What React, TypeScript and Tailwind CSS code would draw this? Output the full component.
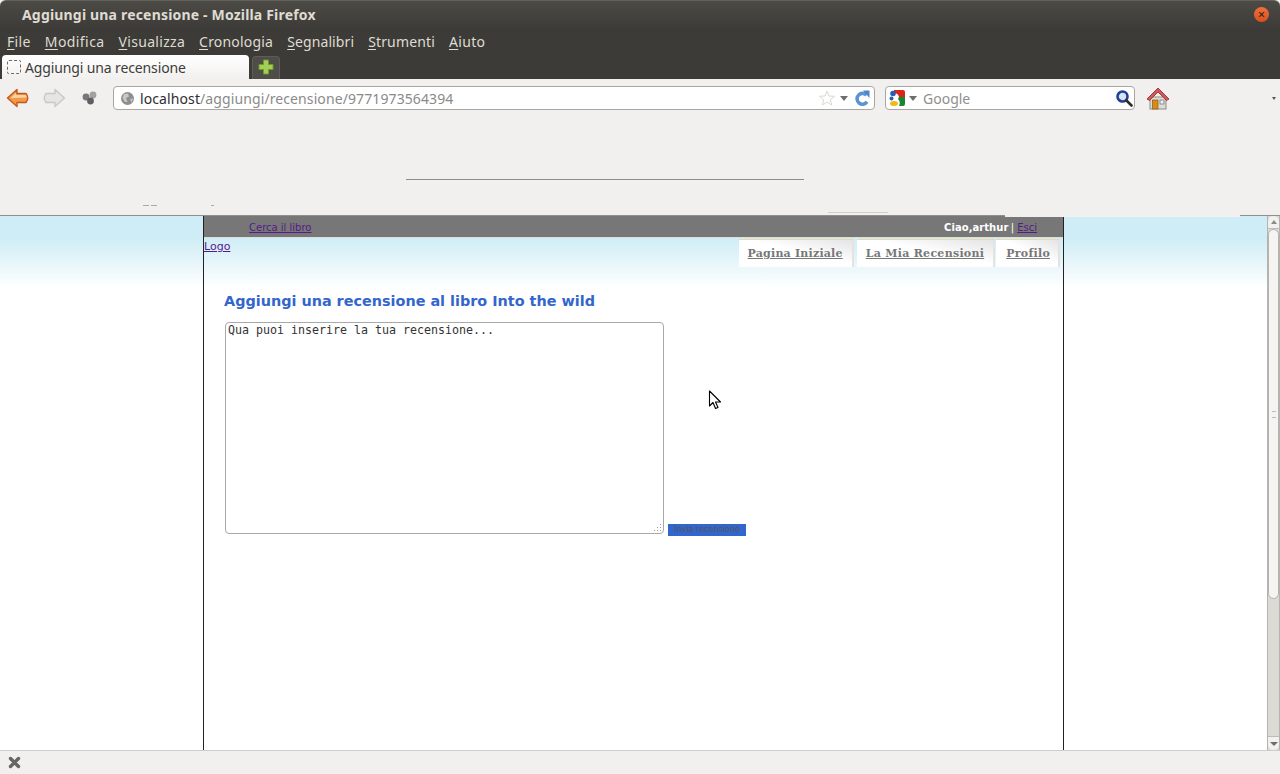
import React from "react";

const UI = { fontFamily: '"Noto Sans", "Open Sans", sans-serif' };

function U({ children }: { children: string }) {
  return <span className="underline underline-offset-2">{children}</span>;
}

function MenuItem({ first, rest, spacing }: { first: string; rest: string; spacing: string }) {
  return (
    <span className={`text-[14px] text-[#dfdbd2] ${spacing}`}>
      <U>{first}</U>
      {rest}
    </span>
  );
}

function BackArrow() {
  return (
    <svg width="24" height="22" viewBox="0 0 24 22">
      <path d="M1.5 11 L11 2.5 L11 6.5 L20 6.5 Q23.5 11 20 15.5 L11 15.5 L11 19.5 Z" fill="#f09a4c" stroke="#c4581b" strokeWidth="1.4" strokeLinejoin="round" />
      <path d="M4.5 11 L10 6 L10 8 L20 8 L21 10.5 L6 11 Z" fill="#fbd3a4" />
    </svg>
  );
}

function ForwardArrow() {
  return (
    <svg width="24" height="22" viewBox="0 0 24 22">
      <path d="M22.5 11 L13 2.5 L13 6.5 L4 6.5 Q0.5 11 4 15.5 L13 15.5 L13 19.5 Z" fill="#e6e5e2" stroke="#c9c8c5" strokeWidth="1.4" strokeLinejoin="round" />
    </svg>
  );
}

function Reload() {
  return (
    <svg width="16" height="17" viewBox="0 0 16 17">
      <path d="M12.5 5.2 A5.4 5.4 0 1 0 13 11.8" fill="none" stroke="#5b94d3" strokeWidth="3.6" />
      <path d="M9 0.5 L15.5 0.5 L15.5 8 Z" fill="#4a86cc" />
    </svg>
  );
}

function Star() {
  return (
    <svg width="16" height="16" viewBox="0 0 16 16">
      <path d="M8 1 L10 6 L15.5 6.3 L11.3 9.8 L12.7 15 L8 12.1 L3.3 15 L4.7 9.8 L0.5 6.3 L6 6 Z" fill="#fff" stroke="#d8d8d6" />
    </svg>
  );
}

function Caret() {
  return <span className="w-0 h-0 border-x-[4px] border-x-transparent border-t-[5px] border-t-[#6e6e6e]" />;
}

function GoogleIcon() {
  return (
    <svg width="16" height="16" viewBox="0 0 16 16">
      <rect x="0" y="0" width="16" height="16" rx="2" fill="#fff" />
      <path d="M5 0 H14 Q16 0 16 2 V7 H10 Q9 3 5 3 Z" fill="#d8261f" />
      <path d="M10 7 H16 V14 Q16 16 14 16 H10 Q12 12 9 9 Z" fill="#17862d" />
      <circle cx="4" cy="3.5" r="2.8" fill="#2a5cb4" />
      <circle cx="2.5" cy="8.5" r="2" fill="#2a5cb4" />
      <ellipse cx="5" cy="13.5" rx="4" ry="2.5" fill="#f2b71a" />
    </svg>
  );
}

function Magnifier() {
  return (
    <svg width="18" height="18" viewBox="0 0 18 18">
      <circle cx="7.5" cy="7.5" r="5" fill="#d6e4f5" stroke="#23408f" strokeWidth="2.6" />
      <path d="M11.5 11.5 L16.5 16.5" stroke="#2d2d2d" strokeWidth="2.6" strokeLinecap="round" />
    </svg>
  );
}

function Home() {
  return (
    <svg width="24" height="24" viewBox="0 0 24 24">
      <rect x="4" y="11" width="16" height="12" fill="#dcdcd8" stroke="#8b8b87" />
      <path d="M1 13 L12 2 L23 13 L20.5 14.5 L12 6 L3.5 14.5 Z" fill="#d0575a" stroke="#a43c3e" strokeLinejoin="round" />
      <rect x="6.5" y="14" width="5.5" height="9" fill="#d88a1c" stroke="#8f5c10" strokeWidth="0.7" />
      <rect x="14" y="14" width="4" height="4" fill="#eef1f4" stroke="#8b8b87" />
    </svg>
  );
}

function Tab({ label, box, spacing }: { label: string; box: string; spacing: string }) {
  return (
    <span className={`h-[28px] border-t border-t-[#eed9a6] border-r-2 border-r-[#e3e3e3] pt-[6px] flex items-start bg-gradient-to-tr from-white from-55% to-[#e4e4e4] ${box}`}>
      <a className={`underline text-[#777] font-bold text-[11px] leading-[16px] ${spacing}`} style={{ fontFamily: '"DejaVu Serif", serif' }}>
        {label}
      </a>
    </span>
  );
}

function Scrollbar() {
  return (
    <div className="w-[13px] shrink-0 bg-[#dcdad5] border-x border-[#b5b3ae] flex flex-col items-stretch">
      <div className="h-[13px] bg-[#f2f1ef] rounded-t-[6px] flex items-center justify-center border-b border-[#bbb]">
        <span className="w-0 h-0 border-x-[3px] border-x-transparent border-b-[4px] border-b-[#8b8b8b]" />
      </div>
      <div className="h-[370px] bg-[#f5f4f2] rounded-[6px] border border-[#b5b3ae] flex items-center justify-center">
        <span className="w-[4px] h-[7px] border-y border-[#bbb]" />
      </div>
      <div className="flex-1" />
      <div className="h-[14px] bg-[#f2f1ef] rounded-b-[6px] flex items-center justify-center border-t border-[#bbb]">
        <span className="w-0 h-0 border-x-[4px] border-x-transparent border-t-[4px] border-t-[#6e6e6e]" />
      </div>
    </div>
  );
}

export default function App() {
  return (
    <div className="relative w-[1280px] h-[774px] overflow-hidden flex flex-col bg-[#f1f0ee]" style={UI}>
      {/* Title bar */}
      <div className="h-[30px] shrink-0 bg-gradient-to-b from-[#4b4a45] to-[#3d3b37] rounded-t-[6px] border-t border-[#62615b] flex items-center justify-between pl-[22px] pr-[11px] pb-[2px]">
        <span className="text-[14px] font-bold text-[#dfdbd2] tracking-[0.18px]">Aggiungi una recensione - Mozilla Firefox</span>
        <span className="w-[15px] h-[15px] rounded-full bg-gradient-to-b from-[#f0703a] to-[#d9501e] flex items-center justify-center text-[#2f211a] text-[13px] leading-none">×</span>
      </div>
      {/* Menu */}
      <div className="h-[25px] shrink-0 bg-[#3d3b37] flex items-center gap-[14px] pl-[7px] pb-[2px]">
        <MenuItem first="F" rest="ile" spacing="tracking-[0.33px]" />
        <MenuItem first="M" rest="odifica" spacing="tracking-[0.43px]" />
        <MenuItem first="V" rest="isualizza" spacing="tracking-[0.3px]" />
        <MenuItem first="C" rest="ronologia" spacing="tracking-[0.2px]" />
        <MenuItem first="S" rest="egnalibri" spacing="tracking-[0.1px]" />
        <MenuItem first="S" rest="trumenti" spacing="tracking-[0.15px]" />
        <MenuItem first="A" rest="iuto" spacing="tracking-[0.33px]" />
      </div>
      {/* Tabs */}
      <div className="h-[24px] shrink-0 bg-[#3d3b37] flex items-end pl-[2px] gap-[3px]">
        <div className="w-[247px] h-[24px] bg-gradient-to-b from-white to-[#f1f0ee] rounded-t-[4px] flex items-center pl-[5px] gap-[4px]">
          <span className="w-[14px] h-[14px] rounded-[2px] border border-dashed border-[#6b6b6b]" />
          <span className="text-[14px] text-[#3c3c3c] tracking-[-0.13px]">Aggiungi una recensione</span>
        </div>
        <div className="w-[28px] h-[23px] bg-[#4e4d48] border border-[#5e5d58] border-b-0 rounded-t-[4px] flex items-center justify-center pb-[2px]">
          <svg width="16" height="16" viewBox="0 0 16 16">
            <path d="M5.5 1 H10.5 V5.5 H15 V10.5 H10.5 V15 H5.5 V10.5 H1 V5.5 H5.5 Z" fill="#a4cf57" stroke="#6f9a2c" />
          </svg>
        </div>
      </div>
      {/* Toolbar */}
      <div className="h-[137px] shrink-0 bg-[#f1f0ee] flex flex-col border-b border-[#8f8f8f]">
        <div className="h-[38px] flex items-center shrink-0">
          <div className="w-[113px] flex items-center pl-[6px] gap-[12px]">
            <BackArrow />
            <ForwardArrow />
            <svg width="18" height="16" viewBox="0 0 18 16" className="ml-[3px]">
              <circle cx="5" cy="7" r="3.4" fill="#77777a" />
              <circle cx="12" cy="5" r="3.4" fill="#a0a0a2" />
              <circle cx="9.5" cy="11" r="3.4" fill="#5f5f62" />
            </svg>
          </div>
          <div className="w-[762px] h-[24px] bg-white border border-[#aaa7a2] rounded-[4px] flex items-center pl-[6px] pr-[4px]">
            <svg width="15" height="15" viewBox="0 0 15 15">
              <circle cx="7.5" cy="7.5" r="6.5" fill="#8e8e8e" />
              <path d="M4 3 L8 2.5 L9 5.5 L6 7 L7.5 11 L5 11 L2.5 7 Z M10 8 L13 7.5 L11.5 11.5 Z" fill="#c8c8c8" />
            </svg>
            <span className="text-[14px] ml-[5px] text-[#2e2e2e] tracking-[0.1px]">localhost</span>
            <span className="text-[14px] text-[#8a8a8a] tracking-[0.1px]">/aggiungi/recensione/9771973564394</span>
            <span className="flex-1" />
            <Star />
            <span className="ml-[5px] mr-[6px] flex"><Caret /></span>
            <Reload />
          </div>
          <div className="w-[250px] h-[24px] ml-[10px] bg-white border border-[#aaa7a2] rounded-[4px] flex items-center pl-[3px] pr-[1px]">
            <GoogleIcon />
            <span className="ml-[4px] flex"><Caret /></span>
            <span className="text-[14px] text-[#8f8f8f] ml-[6px] flex-1">Google</span>
            <Magnifier />
          </div>
          <span className="ml-[11px] flex"><Home /></span>
          <span className="flex-1" />
          <span className="mr-[4px] w-0 h-0 border-x-[2px] border-x-transparent border-t-[3px] border-t-[#555]" />
        </div>
        <div className="pl-[406px] pt-[62px]">
          <div className="w-[398px] h-px bg-[#8c8c8c]" />
        </div>
      </div>
      {/* Content */}
      <div className="flex-1 min-h-0 flex bg-white">
        <div className="flex-1 min-w-0 bg-[linear-gradient(#cfedf6_0,#cfedf6_22px,#ffffff_72px)] pl-[203px]">
          <div className="w-[861px] h-full border-x border-[#222] flex flex-col">
            <div className="h-[22px] shrink-0 bg-[#777] border-b border-[#ddd] flex items-center justify-between pl-[45px] pr-[26px] pt-[1px] text-[10px]" style={{ fontFamily: '"DejaVu Sans", sans-serif' }}>
              <a className="underline text-[#551a8b]">Cerca il libro</a>
              <span className="text-white">
                <b className="tracking-[0.05px] mr-[-1px]">Ciao,arthur</b> | <a className="underline text-[#551a8b]">Esci</a>
              </span>
            </div>
            <div className="flex justify-between items-start h-[30px] shrink-0 pr-[3px]">
              <a className="underline text-[#551a8b] text-[11px] leading-[16px] pt-[1px]" style={{ fontFamily: '"DejaVu Sans", sans-serif' }}>Logo</a>
              <div className="flex gap-[1px] pt-[1px]">
                <Tab label="Pagina Iniziale" box="pl-[9px] pr-[9px] mr-[2px]" spacing="tracking-[0.21px]" />
                <Tab label="La Mia Recensioni" box="pl-[9px] pr-[9px]" spacing="tracking-[0.28px]" />
                <Tab label="Profilo" box="pl-[10px] pr-[8px]" spacing="tracking-[0.28px]" />
              </div>
            </div>
            <h1 className="text-[#3366cc] font-bold text-[14.4px] leading-[18px] mt-[24px] ml-[20px]" style={{ fontFamily: '"DejaVu Sans", sans-serif' }}>
              Aggiungi una recensione al libro Into the wild
            </h1>
            <div className="flex items-end ml-[21px] mt-[12px]">
              <div className="relative w-[439px] h-[212px] bg-white border border-[#a9a9a9] rounded-[4px] pl-[2px] pt-[1px] text-[11.63px] leading-[13px] text-[#333]" style={{ fontFamily: '"DejaVu Sans Mono", monospace' }}>
                Qua puoi inserire la tua recensione...
                <svg width="9" height="9" viewBox="0 0 9 9" className="absolute right-px bottom-px">
                  <g fill="#9a9a9a">
                    <rect x="7" y="1" width="1" height="1" /><rect x="4" y="4" width="1" height="1" /><rect x="7" y="4" width="1" height="1" />
                    <rect x="1" y="7" width="1" height="1" /><rect x="4" y="7" width="1" height="1" /><rect x="7" y="7" width="1" height="1" />
                  </g>
                </svg>
              </div>
              <button className="ml-[4px] mb-[-2px] w-[78px] h-[12px] bg-[#3366cc] text-[#555] text-[8px] leading-[12px] text-center" style={{ fontFamily: '"DejaVu Sans", sans-serif' }}>
                Invia recensione
              </button>
              <svg width="14" height="20" viewBox="0 0 14 20" className="absolute left-[708px] top-[390px]">
                <path d="M1.5 1 V16 L5 12.5 L7.5 18.5 L10 17.5 L7.5 12 H12.5 Z" fill="#fff" stroke="#000" strokeWidth="1.1" strokeLinejoin="round" />
              </svg>
            </div>
          </div>
        </div>
        <Scrollbar />
      </div>
      {/* Status bar */}
      <div className="h-[24px] shrink-0 bg-[#f1f0ee] border-t border-[#cfcdc9] flex items-center pl-[8px]">
        <svg width="13" height="13" viewBox="0 0 13 13">
          <path d="M2.5 2.5 L10.5 10.5 M10.5 2.5 L2.5 10.5" stroke="#666" strokeWidth="3.4" strokeLinecap="round" />
        </svg>
      </div>
      {/* Stray marks left over the toolbar */}
      <span className="absolute left-[143px] top-[205px] w-[6px] h-px bg-[#aaa]" />
      <span className="absolute left-[151px] top-[205px] w-[6px] h-px bg-[#aaa]" />
      <span className="absolute left-[211px] top-[205px] w-[3px] h-px bg-[#aaa]" />
      <span className="absolute left-[828px] top-[212px] w-[60px] h-px bg-[#cfcfcd]" />
      <span className="absolute left-[1005px] top-[215px] w-[235px] h-[2px] bg-[#f1f0ee]" />
      <span className="absolute left-[1180px] top-[86px] w-[70px] h-[2px] bg-[#f1f0ee]" />
    </div>
  );
}
